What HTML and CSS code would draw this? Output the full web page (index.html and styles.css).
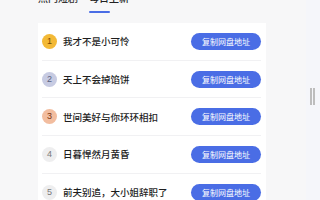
FILE: index.html
```html
<!DOCTYPE html>
<html lang="zh">
<head>
<meta charset="utf-8">
<link rel="stylesheet" href="styles.css">
</head>
<body>
<div class="main">
  <div class="tabs">
    <div class="tab">热门短剧</div>
    <div class="tab active">每日上新<span class="bar"></span></div>
  </div>
  <div class="card">
    <div class="row"><span class="badge b1">1</span><span class="title">我才不是小可怜</span><span class="btn">复制网盘地址</span></div>
    <div class="row"><span class="badge b2">2</span><span class="title">天上不会掉馅饼</span><span class="btn">复制网盘地址</span></div>
    <div class="row"><span class="badge b3">3</span><span class="title">世间美好与你环环相扣</span><span class="btn">复制网盘地址</span></div>
    <div class="row"><span class="badge b4">4</span><span class="title">日暮悍然月黄昏</span><span class="btn">复制网盘地址</span></div>
    <div class="row"><span class="badge b4">5</span><span class="title">前夫别追，大小姐辞职了</span><span class="btn">复制网盘地址</span></div>
  </div>
</div>
<div class="rail"><div class="thumbs"><span></span><span></span></div></div>
</body>
</html>
```
FILE: styles.css
```css
html, body { margin: 0; padding: 0; }
body {
  width: 320px;
  height: 200px;
  overflow: hidden;
  display: flex;
  background: #f7f7f8;
  font-family: "Noto Sans CJK SC", "Noto Sans", sans-serif;
}
.main {
  width: 306px;
  padding-left: 38px;
  box-sizing: border-box;
}
.tabs {
  display: flex;
  gap: 11px;
  margin-top: -8px;
  margin-bottom: 10px;
}
.tab {
  font-size: 10px;
  line-height: 12px;
  color: #333;
  font-weight: 500;
  display: flex;
  flex-direction: column;
}
.tab.active { color: #222; }
.bar {
  display: block;
  width: 21px;
  height: 2px;
  border-radius: 1px;
  background: #4a6de5;
  margin-top: 7px;
}
.card {
  width: 228px;
  background: #fff;
  padding: 0 5px 0 4px;
  box-sizing: border-box;
}
.row {
  display: flex;
  align-items: center;
  height: 37.7px;
  box-sizing: border-box;
  border-bottom: 1px solid #f1f1f3;
}
.badge {
  width: 15px;
  height: 15px;
  border-radius: 50%;
  font-size: 9px;
  line-height: 15px;
  text-align: center;
  flex: none;
  font-family: "Liberation Sans", sans-serif;
}
.b1 { background: #f3b936; color: #7a4b00; }
.b2 { background: #c7cbe2; color: #5b6180; }
.b3 { background: #f2bd9f; color: #7a3512; }
.b4 { background: #eeeeef; color: #7a7a7a; }
.title {
  margin-left: 6px;
  font-size: 9.5px;
  color: #1e1e1e;
  font-weight: 500;
  flex: 1;
  white-space: nowrap;
}
.btn {
  flex: none;
  width: 70px;
  height: 17px;
  border-radius: 9px;
  background: #4a6de5;
  color: #fff;
  font-size: 8px;
  line-height: 17px;
  text-align: center;
}
.rail {
  width: 14px;
  background: #f5f6fa;
  position: relative;
}
.thumbs {
  position: absolute;
  left: 4px;
  top: 88px;
  display: flex;
  gap: 1px;
}
.thumbs span {
  display: block;
  width: 2px;
  height: 17px;
  background: #bdbdbd;
}
```
